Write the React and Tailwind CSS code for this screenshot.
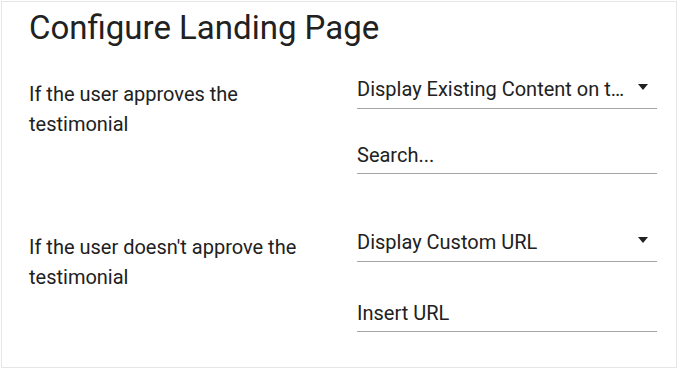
import { useState } from "react";

function SelectField({ value }) {
  return (
    <div className="flex items-center h-[40px] border-b border-[#a6a6a6] pr-[9px]">
      <span className="flex-1 truncate text-[20px] text-[#212121]">{value}</span>
      <svg width="10" height="6" viewBox="0 0 10 6" className="ml-[10px] shrink-0 mt-[-3px]">
        <path d="M0 0h10L5 6z" fill="#212121" />
      </svg>
    </div>
  );
}

function TextField({ placeholder }) {
  const [val, setVal] = useState("");
  return (
    <input
      value={val}
      onChange={(e) => setVal(e.target.value)}
      placeholder={placeholder}
      className="w-full h-[40px] pt-[3px] border-b border-[#a6a6a6] bg-transparent text-[20px] text-[#212121] placeholder:text-[#212121] outline-none"
    />
  );
}

function Row({ label, select, input, gap }) {
  return (
    <div className="flex">
      <div className="w-[328px] pt-[10px]">
        <p className="w-[290px] text-[20px] leading-[30px] text-[#212121]">{label}</p>
      </div>
      <div className={`w-[300px] flex flex-col ${gap}`}>
        <SelectField value={select} />
        <TextField placeholder={input} />
      </div>
    </div>
  );
}

export default function App() {
  return (
    <div
      className="w-[680px] h-[370px] bg-white pt-[1px] pl-[1px]"
      style={{ fontFamily: "Roboto, 'Liberation Sans', sans-serif" }}
    >
      <div className="w-[676px] h-[367px] border border-[#e6e6e6] pl-[27px] pt-[6px]">
        <h1 className="text-[33px] leading-[40px] text-[#212121] mb-[21px]">
          Configure Landing Page
        </h1>
        <div className="flex flex-col gap-[48px]">
          <Row
            label="If the user approves the testimonial"
            select="Display Existing Content on the Landing Page"
            input="Search..."
            gap="gap-[25px]"
          />
          <Row
            label="If the user doesn't approve the testimonial"
            select="Display Custom URL"
            input="Insert URL"
            gap="gap-[30px]"
          />
        </div>
      </div>
    </div>
  );
}
